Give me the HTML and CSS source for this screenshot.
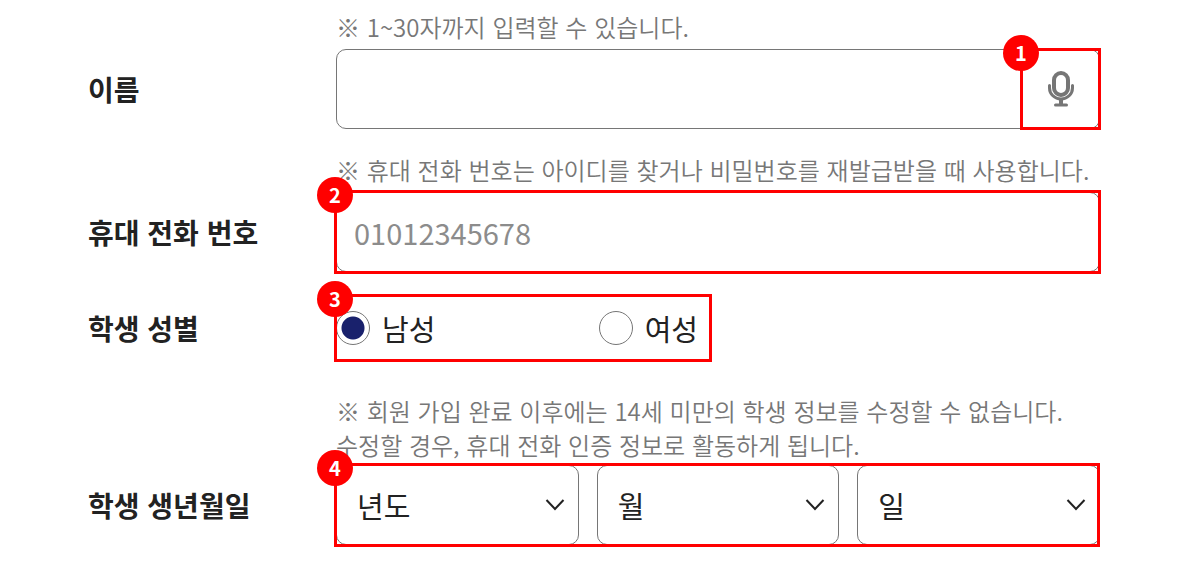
FILE: index.html
```html
<!DOCTYPE html>
<html lang="ko">
    <head>
        <title>회원 가입</title>
        <meta charset="utf-8">
        <meta name="viewport" content="width=device-width, initial-scale=1">
        <link rel="stylesheet" href="styles.css">
    </head>
    <body>

        <form class="join">
            <div class="row">
                <p class="hint" id="nameHint">※ 1~30자까지 입력할 수 있습니다.</p>
                <label class="title" for="name">이름</label>
                <div class="control box">
                    <input type="text" id="name" name="name" maxlength="30" aria-describedby="nameHint">
                    <div class="mic">
                        <button type="button" aria-label="음성 입력">
                            <svg width="28" height="36" viewBox="0 0 28 36" fill="none" stroke="#767676" stroke-width="3">
                                <rect x="7" y="2" width="14" height="22" rx="7" stroke-width="4"/>
                                <path d="M2.500 14.500v2.500a11.500 11 0 0 0 23 0v-2.500" stroke-linecap="round"/>
                                <path d="M14 28v5" stroke-width="4"/>
                                <path d="M8.500 34h11" stroke-linecap="round"/>
                            </svg>
                        </button>
                        <div class="mark"><span class="num">1</span></div>
                    </div>
                </div>
            </div>

            <div class="row">
                <p class="hint" id="phoneHint">※ 휴대 전화 번호는 아이디를 찾거나 비밀번호를 재발급받을 때 사용합니다.</p>
                <label class="title" for="phone">휴대 전화 번호</label>
                <div class="control box">
                    <input type="text" id="phone" name="phone" placeholder="01012345678" aria-describedby="phoneHint">
                    <div class="mark"><span class="num">2</span></div>
                </div>
            </div>

            <div class="row" role="radiogroup" aria-labelledby="genderTitle">
                <span class="title" id="genderTitle">학생 성별</span>
                <div class="control gender">
                    <label class="radio"><input type="radio" name="gender" value="M" checked>남성</label>
                    <label class="radio"><input type="radio" name="gender" value="F">여성</label>
                    <div class="mark"><span class="num">3</span></div>
                </div>
            </div>

            <div class="row birth-row" role="group" aria-labelledby="birthTitle">
                <p class="hint">※ 회원 가입 완료 이후에는 14세 미만의 학생 정보를 수정할 수 없습니다.<br>수정할 경우, 휴대 전화 인증 정보로 활동하게 됩니다.</p>
                <span class="title" id="birthTitle">학생 생년월일</span>
                <div class="control birth">
                    <div class="select">
                        <select name="year" aria-label="년도"><option>년도</option></select>
                        <svg width="20" height="12" viewBox="0 0 20 12" fill="none" stroke="#222" stroke-width="2"><path d="M1.500 1l8.500 9 8.500-9"/></svg>
                    </div>
                    <div class="select">
                        <select name="month" aria-label="월"><option>월</option></select>
                        <svg width="20" height="12" viewBox="0 0 20 12" fill="none" stroke="#222" stroke-width="2"><path d="M1.500 1l8.500 9 8.500-9"/></svg>
                    </div>
                    <div class="select">
                        <select name="day" aria-label="일"><option>일</option></select>
                        <svg width="20" height="12" viewBox="0 0 20 12" fill="none" stroke="#222" stroke-width="2"><path d="M1.500 1l8.500 9 8.500-9"/></svg>
                    </div>
                    <div class="mark"><span class="num">4</span></div>
                </div>
            </div>
        </form>

    </body>
</html>
```
FILE: styles.css
```css
* {
    box-sizing: border-box;
}
body {
    margin: 0;
    background-color: #fff;
    color: #222;
    font-family: "Noto Sans CJK KR", "Noto Sans", sans-serif;
    font-size: 29px;
}
input, select, button {
    font: inherit;
    color: inherit;
}
.join {
    display: flex;
    flex-direction: column;
    gap: 24px;
    padding: 10px 88px 24px;
}
.row {
    display: grid;
    grid-template-columns: 248px 1fr;
    align-items: center;
}
.title {
    grid-column: 1;
    font-size: 28px;
    font-weight: bold;
    line-height: 40px;
}
.hint {
    grid-column: 2;
    margin: 0 0 5px;
    font-size: 24px;
    font-weight: 350;
    line-height: 34px;
    color: #777;
}
.control {
    grid-column: 2;
    position: relative;
}
/* Text boxes */
.box {
    display: flex;
    height: 80px;
    border: 1px solid #767676;
    border-radius: 10px;
}
.box input {
    flex: 1;
    min-width: 0;
    padding: 0 17px;
    border: none;
    border-radius: 10px;
    background: none;
    outline: none;
}
.box input::placeholder {
    color: #8c8c8c;
    opacity: 1;
}
.mic {
    position: relative;
    display: flex;
    width: 77px;
}
.mic button {
    display: flex;
    flex: 1;
    align-items: center;
    justify-content: center;
    padding: 0;
    border: none;
    background: none;
    cursor: pointer;
}
/* Radio buttons */
.gender {
    display: flex;
    justify-self: start;
    width: 374px;
    height: 64px;
}
.radio {
    display: flex;
    flex: 1 0 auto;
    align-items: center;
    gap: 12px;
    cursor: pointer;
}
.radio + .radio {
    flex: none;
    padding-right: 12px;
}
.radio input {
    appearance: none;
    width: 34px;
    height: 34px;
    margin: 0;
    border: 1px solid #767676;
    border-radius: 50%;
}
.radio input:checked {
    background: radial-gradient(circle, #19216c 11px, #fff 12px);
}
/* Birth date */
.birth-row {
    margin-top: 10px;
}
.birth-row .hint {
    margin-bottom: 3px;
}
.birth {
    display: grid;
    grid-template-columns: repeat(3, 1fr);
    gap: 18px;
}
.select {
    display: grid;
    align-items: center;
}
.select select {
    grid-area: 1 / 1;
    appearance: none;
    width: 100%;
    height: 80px;
    padding: 0 20px;
    border: 1px solid #767676;
    border-radius: 10px;
    background: none;
}
.select svg {
    grid-area: 1 / 1;
    justify-self: end;
    margin-right: 14px;
    pointer-events: none;
}
/* Numbered red frames */
.mark {
    position: absolute;
    inset: -2px;
    border: 3px solid #f00;
    pointer-events: none;
}
.box > .mark {
    inset: -3px -2px -3px -3px;
}
.birth .mark {
    inset: -2px 0 -2px -2px;
}
.num {
    position: absolute;
    top: -16px;
    left: -20px;
    width: 36px;
    height: 36px;
    border-radius: 50%;
    background-color: #f00;
    color: #fff;
    font-size: 20px;
    font-weight: bold;
    line-height: 36px;
    text-align: center;
}
@media screen and (max-width: 800px) {
    .join {
        padding: 10px 24px 24px;
    }
    .row {
        grid-template-columns: 1fr;
    }
    .title, .hint, .control {
        grid-column: 1;
    }
    .title {
        grid-row: 1;
        margin-bottom: 8px;
    }
}
```
